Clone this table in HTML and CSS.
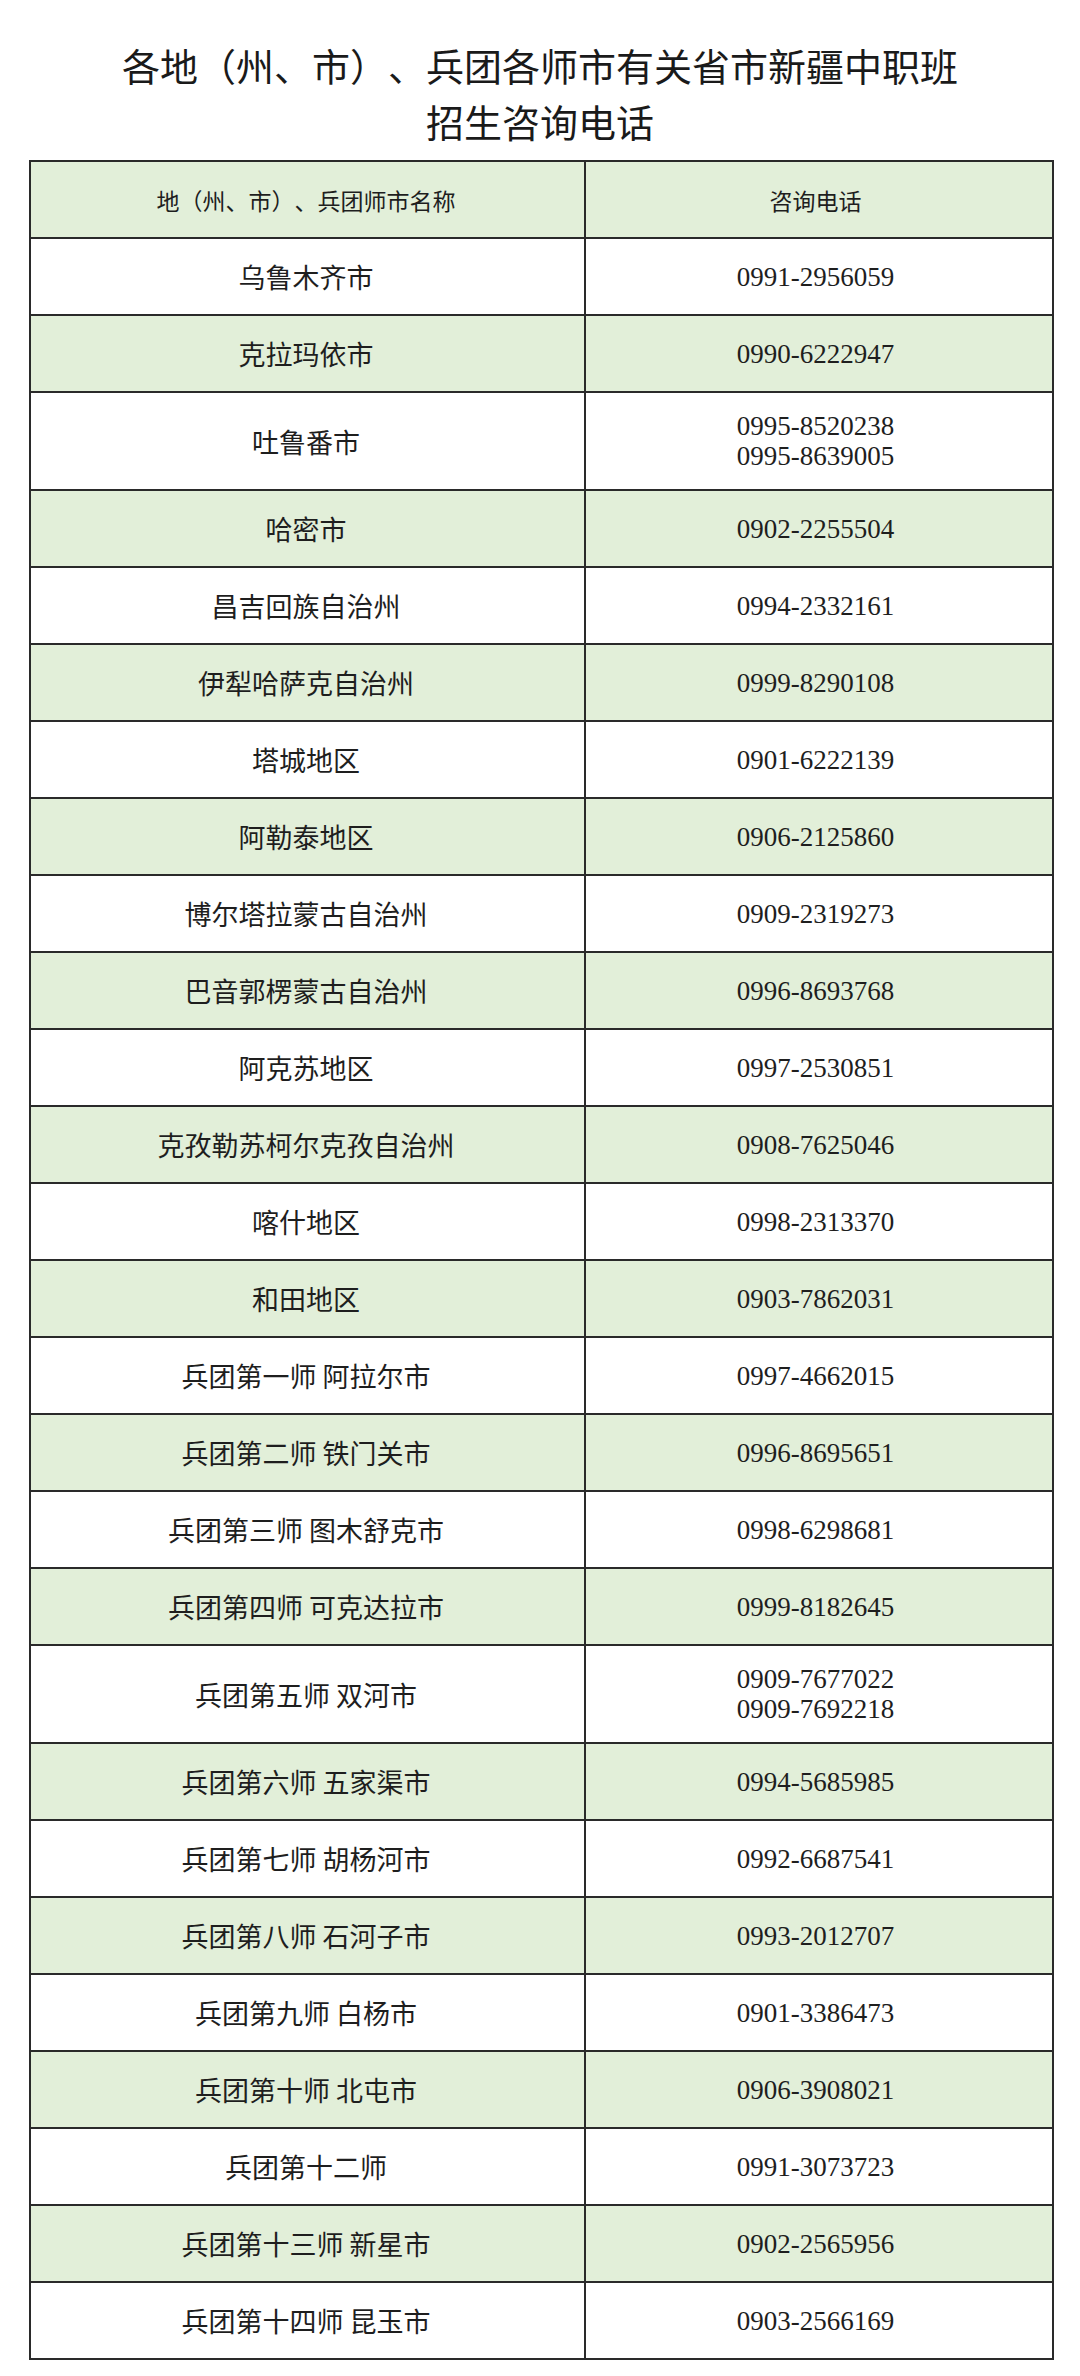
FILE: index.html
```html
<!DOCTYPE html>
<html lang="zh-CN">
<head>
<meta charset="utf-8">
<title>招生咨询电话</title>
<link rel="stylesheet" href="styles.css">
</head>
<body>
<main class="page">
  <h1 class="title">各地（州、市）、兵团各师市有关省市新疆中职班<br>招生咨询电话</h1>
  <div class="table">
    <div class="row head">
      <div class="cell name">地（州、市）、兵团师市名称</div>
      <div class="cell phone">咨询电话</div>
    </div>
    <div class="tbody">
      <div class="row"><div class="cell name">乌鲁木齐市</div><div class="cell phone">0991-2956059</div></div>
      <div class="row"><div class="cell name">克拉玛依市</div><div class="cell phone">0990-6222947</div></div>
      <div class="row tall"><div class="cell name">吐鲁番市</div><div class="cell phone">0995-8520238<br>0995-8639005</div></div>
      <div class="row"><div class="cell name">哈密市</div><div class="cell phone">0902-2255504</div></div>
      <div class="row"><div class="cell name">昌吉回族自治州</div><div class="cell phone">0994-2332161</div></div>
      <div class="row"><div class="cell name">伊犁哈萨克自治州</div><div class="cell phone">0999-8290108</div></div>
      <div class="row"><div class="cell name">塔城地区</div><div class="cell phone">0901-6222139</div></div>
      <div class="row"><div class="cell name">阿勒泰地区</div><div class="cell phone">0906-2125860</div></div>
      <div class="row"><div class="cell name">博尔塔拉蒙古自治州</div><div class="cell phone">0909-2319273</div></div>
      <div class="row"><div class="cell name">巴音郭楞蒙古自治州</div><div class="cell phone">0996-8693768</div></div>
      <div class="row"><div class="cell name">阿克苏地区</div><div class="cell phone">0997-2530851</div></div>
      <div class="row"><div class="cell name">克孜勒苏柯尔克孜自治州</div><div class="cell phone">0908-7625046</div></div>
      <div class="row"><div class="cell name">喀什地区</div><div class="cell phone">0998-2313370</div></div>
      <div class="row"><div class="cell name">和田地区</div><div class="cell phone">0903-7862031</div></div>
      <div class="row"><div class="cell name">兵团第一师 阿拉尔市</div><div class="cell phone">0997-4662015</div></div>
      <div class="row"><div class="cell name">兵团第二师 铁门关市</div><div class="cell phone">0996-8695651</div></div>
      <div class="row"><div class="cell name">兵团第三师 图木舒克市</div><div class="cell phone">0998-6298681</div></div>
      <div class="row"><div class="cell name">兵团第四师 可克达拉市</div><div class="cell phone">0999-8182645</div></div>
      <div class="row tall"><div class="cell name">兵团第五师 双河市</div><div class="cell phone">0909-7677022<br>0909-7692218</div></div>
      <div class="row"><div class="cell name">兵团第六师 五家渠市</div><div class="cell phone">0994-5685985</div></div>
      <div class="row"><div class="cell name">兵团第七师 胡杨河市</div><div class="cell phone">0992-6687541</div></div>
      <div class="row"><div class="cell name">兵团第八师 石河子市</div><div class="cell phone">0993-2012707</div></div>
      <div class="row"><div class="cell name">兵团第九师 白杨市</div><div class="cell phone">0901-3386473</div></div>
      <div class="row"><div class="cell name">兵团第十师 北屯市</div><div class="cell phone">0906-3908021</div></div>
      <div class="row"><div class="cell name">兵团第十二师</div><div class="cell phone">0991-3073723</div></div>
      <div class="row"><div class="cell name">兵团第十三师 新星市</div><div class="cell phone">0902-2565956</div></div>
      <div class="row"><div class="cell name">兵团第十四师 昆玉市</div><div class="cell phone">0903-2566169</div></div>
    </div>
  </div>
</main>
</body>
</html>
```
FILE: styles.css
```css
html, body {
  margin: 0;
  padding: 0;
  background: #ffffff;
}

.page {
  width: 1080px;
  padding-top: 37px;
  display: flex;
  flex-direction: column;
  align-items: center;
  text-spacing-trim: space-all;
}

.title {
  margin: 0;
  font-family: "Noto Sans CJK SC", "Noto Sans", sans-serif;
  font-weight: 400;
  font-size: 38px;
  line-height: 56px;
  color: #1a1a1a;
  text-align: center;
  text-spacing-trim: space-all;
}

.table {
  margin-top: 11px;
  margin-left: 2px;
  width: 1025px;
  border-top: 2px solid #2a2a2a;
  border-left: 2px solid #2a2a2a;
  box-sizing: border-box;
}

.row {
  display: grid;
  grid-template-columns: 555px 468px;
  height: 77px;
  background: #ffffff;
}

.row.tall {
  height: 98px;
}

.head,
.tbody .row:nth-child(even) {
  background: #e2efd9;
}

.cell {
  display: flex;
  align-items: center;
  justify-content: center;
  text-align: center;
  border-right: 2px solid #2a2a2a;
  border-bottom: 2px solid #2a2a2a;
  color: #1e1e1e;
  text-spacing-trim: space-all;
}

.name {
  font-family: "Noto Sans CJK SC", "Noto Sans", sans-serif;
  font-size: 27px;
  padding-right: 2px;
}

.phone {
  font-family: "Liberation Serif", "Times New Roman", serif;
  font-size: 27px;
  line-height: 30px;
  padding-right: 6px;
}

.head .cell {
  font-family: "Noto Sans CJK SC", "Noto Sans", sans-serif;
  font-size: 23px;
}
```
